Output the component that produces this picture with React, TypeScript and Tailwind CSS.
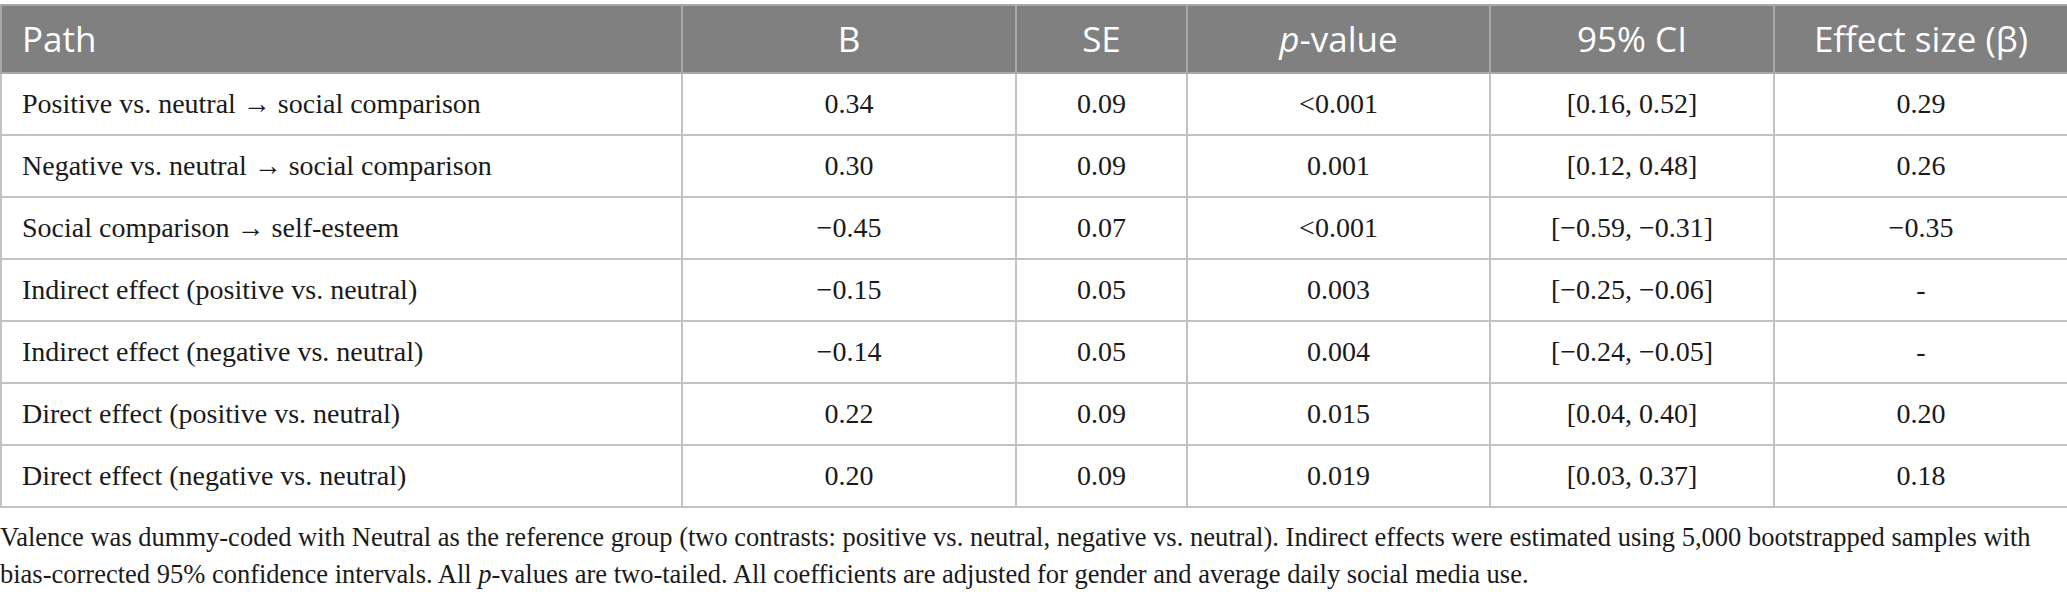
const rows: [React.ReactNode, string, string, string, string, string][] = [
  ["Positive vs. neutral → social comparison", "0.34", "0.09", "<0.001", "[0.16, 0.52]", "0.29"],
  ["Negative vs. neutral → social comparison", "0.30", "0.09", "0.001", "[0.12, 0.48]", "0.26"],
  ["Social comparison → self-esteem", "−0.45", "0.07", "<0.001", "[−0.59, −0.31]", "−0.35"],
  ["Indirect effect (positive vs. neutral)", "−0.15", "0.05", "0.003", "[−0.25, −0.06]", "-"],
  ["Indirect effect (negative vs. neutral)", "−0.14", "0.05", "0.004", "[−0.24, −0.05]", "-"],
  ["Direct effect (positive vs. neutral)", "0.22", "0.09", "0.015", "[0.04, 0.40]", "0.20"],
  ["Direct effect (negative vs. neutral)", "0.20", "0.09", "0.019", "[0.03, 0.37]", "0.18"],
];

const App = () => {
  return (
    <main className="w-[2067px] h-[596px] bg-white pt-[4px] overflow-hidden">
      <table className="table-fixed border-collapse w-[2067px] border-2 border-[#c2c2c2]">
        <colgroup>
          <col className="w-[681px]" />
          <col className="w-[334px]" />
          <col className="w-[171px]" />
          <col className="w-[303px]" />
          <col className="w-[284px]" />
          <col className="w-[294px]" />
        </colgroup>
        <thead>
          <tr className="h-[68px] bg-[#808080] text-white text-[35px] font-['Open_Sans',sans-serif]">
            <th className="font-normal text-left pl-[20px] border-2 border-[#a8a8a8]">Path</th>
            <th className="font-normal text-center border-2 border-[#a8a8a8]">B</th>
            <th className="font-normal text-center border-2 border-[#a8a8a8]">SE</th>
            <th className="font-normal text-center border-2 border-[#a8a8a8]">
              <i>p</i>-value
            </th>
            <th className="font-normal text-center border-2 border-[#a8a8a8]">95% CI</th>
            <th className="font-normal text-center border-2 border-[#a8a8a8]">Effect size (β)</th>
          </tr>
        </thead>
        <tbody className="font-['Liberation_Serif',serif] text-[28px] text-[#1a1a1a]">
          {rows.map((r, i) => (
            <tr key={i} className="h-[62px]">
              <td className="pl-[20px] border-2 border-[#c2c2c2]">{r[0]}</td>
              {r.slice(1).map((c, j) => (
                <td key={j} className="text-center border-2 border-[#c2c2c2]">
                  {c}
                </td>
              ))}
            </tr>
          ))}
        </tbody>
      </table>
      {/* table footnote */}
      <p className="mt-[11px] font-['Liberation_Serif',serif] text-[26.5px] leading-[37px] text-[#1a1a1a]">
        Valence was dummy-coded with Neutral as the reference group (two contrasts: positive vs. neutral, negative vs. neutral). Indirect effects were estimated using 5,000 bootstrapped samples with bias-corrected 95% confidence intervals. All <i>p</i>-values are two-tailed. All coefficients are adjusted for gender and average daily social media use.
      </p>
    </main>
  );
};

export default App;
